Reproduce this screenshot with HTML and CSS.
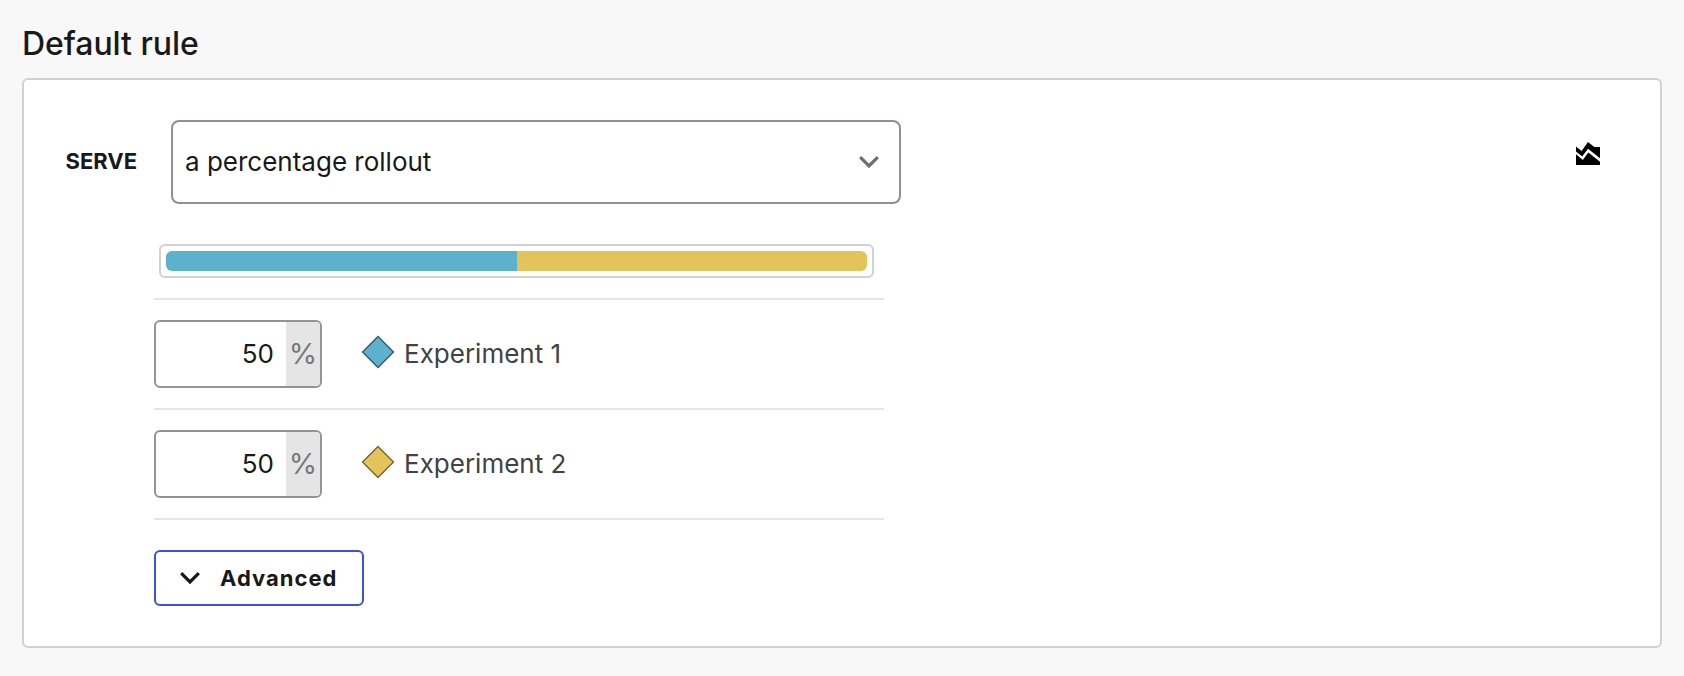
FILE: index.html
```html
<!DOCTYPE html>
<html lang="en">
<head>
<meta charset="utf-8">
<title>Default rule</title>
<link rel="stylesheet" href="styles.css">
</head>
<body>
<main class="page">
  <h2 class="title">Default rule</h2>
  <section class="card">
    <div class="serve-row">
      <span class="serve-label">SERVE</span>
      <div class="select" role="combobox">
        <span class="select-value">a percentage rollout</span>
        <svg class="chevron select-chevron" viewBox="0 0 20 12"><path d="M1.2 1.2 10 10 18.8 1.2"/></svg>
      </div>
      <svg class="chart-icon" viewBox="0 0 24 24"><path d="M0 4.6 5.6 9 12 0 18.3 5H24V16.2L12 6.8 6.2 14.6 0 9.5Z"/><path d="M0 12.3 6.8 18 12.3 10.6 24 19.8V23H0Z"/></svg>
    </div>
    <div class="rollout">
      <div class="bar">
        <div class="bar-part blue" style="width: 50%"></div>
        <div class="bar-part yellow" style="width: 50%"></div>
      </div>
      <div class="variation">
        <div class="percent"><span class="percent-value">50</span><span class="percent-unit">%</span></div>
        <svg class="diamond" viewBox="0 0 32 32"><path class="blue-shape" d="M16 .5 31.5 16 16 31.5 .5 16Z"/></svg>
        <span class="name">Experiment 1</span>
      </div>
      <div class="variation">
        <div class="percent"><span class="percent-value">50</span><span class="percent-unit">%</span></div>
        <svg class="diamond" viewBox="0 0 32 32"><path class="yellow-shape" d="M16 .5 31.5 16 16 31.5 .5 16Z"/></svg>
        <span class="name">Experiment 2</span>
      </div>
      <div class="actions">
        <button class="advanced" type="button">
          <svg class="chevron" viewBox="0 0 20 12"><path d="M1.2 1.2 10 10 18.8 1.2"/></svg>
          <span>Advanced</span>
        </button>
      </div>
    </div>
  </section>
</main>
</body>
</html>
```
FILE: styles.css
```css
* {
  box-sizing: border-box;
}

body {
  margin: 0;
  background: #f8f8f8;
  color: #191919;
  font-family: Inter, "Liberation Sans", sans-serif;
}

.page {
  padding: 24px 22px 28px;
}

.title {
  margin: 0 0 14px;
  font-size: 32px;
  font-weight: 500;
  line-height: 40px;
  letter-spacing: -0.06px;
}

.card {
  height: 570px;
  padding: 40px 60px 40px 41px;
  border: 2px solid #d1d1d1;
  border-radius: 6px;
  background: #fff;
}

.serve-row {
  display: flex;
  align-items: center;
}

.serve-label {
  width: 106px;
  flex: none;
  padding: 0 0 2px 0.5px;
  font-size: 22px;
  font-weight: 700;
  line-height: 28px;
}

.select {
  display: flex;
  align-items: center;
  justify-content: space-between;
  width: 730px;
  height: 84px;
  padding: 0 20px 0 12px;
  border: 2px solid #8a919e;
  border-radius: 8px;
  font-size: 26px;
}

.select-value {
  padding-bottom: 2px;
}

.chevron {
  width: 20px;
  height: 12px;
  fill: none;
  stroke: #191919;
  stroke-width: 3.2;
}

.select-chevron {
  stroke: #6c6e72;
}

.chart-icon {
  width: 24px;
  height: 24px;
  margin: 0 0 16px auto;
  fill: #000;
}

.rollout {
  width: 730px;
  margin: 40px 0 0 89px;
}

.bar {
  display: flex;
  width: 715px;
  height: 34px;
  margin: 0 0 20px 5px;
  padding: 5px;
  border: 2px solid #d1d1d1;
  border-radius: 6px;
}

.bar-part:first-child {
  border-radius: 6px 0 0 6px;
}

.bar-part:last-child {
  border-radius: 0 6px 6px 0;
}

.blue {
  background: #5db1cd;
}

.yellow {
  background: #e5c35b;
}

.variation {
  display: flex;
  align-items: center;
  height: 110px;
  border-top: 2px solid #e5e5e5;
}

.percent {
  display: flex;
  width: 168px;
  height: 68px;
  border: 2px solid #939499;
  border-radius: 6px;
  overflow: hidden;
  line-height: 64px;
}

.percent-value {
  flex: 1;
  padding-right: 12px;
  font-size: 26px;
  text-align: right;
}

.percent-unit {
  width: 34px;
  background: #e5e5e5;
  color: #77787c;
  font-size: 29px;
  line-height: 63px;
  text-align: center;
}

.diamond {
  width: 32px;
  height: 32px;
  margin: 0 10px 4px 40px;
  overflow: visible;
}

.diamond path {
  stroke-width: 1.3;
}

.blue-shape {
  fill: #5db1cd;
  stroke: #2f5967;
}

.yellow-shape {
  fill: #e5c35b;
  stroke: #73622e;
}

.name {
  padding-bottom: 2px;
  color: #424244;
  font-size: 26px;
}

.actions {
  padding-top: 30px;
  border-top: 2px solid #e5e5e5;
}

.advanced {
  display: flex;
  align-items: center;
  gap: 20px;
  width: 210px;
  height: 56px;
  padding: 0 0 0 24px;
  border: 2px solid #3a52d4;
  border-radius: 6px;
  background: #fff;
  color: #191919;
  font: 700 22px Inter, "Liberation Sans", sans-serif;
  letter-spacing: 1px;
}
```
